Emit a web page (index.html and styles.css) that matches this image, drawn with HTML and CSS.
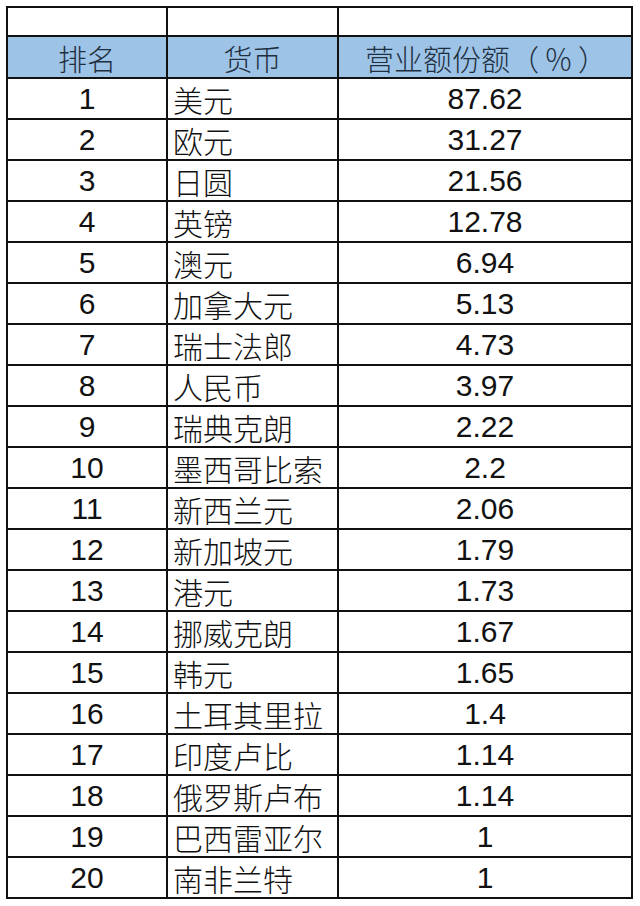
FILE: index.html
```html
<!DOCTYPE html>
<html lang="zh-CN">
<head>
<meta charset="utf-8">
<title>货币营业额份额排名</title>
<link rel="stylesheet" href="styles.css">
</head>
<body>
<table class="sheet">
  <colgroup>
    <col class="c-rank">
    <col class="c-cur">
    <col class="c-val">
  </colgroup>
  <tbody>
    <tr class="blank"><td></td><td></td><td></td></tr>
    <tr class="head"><td>排名</td><td>货币</td><td class="hval">营业额份额（<span class="pct">％</span>）</td></tr>
    <tr><td class="num">1</td><td class="name">美元</td><td class="num">87.62</td></tr>
    <tr><td class="num">2</td><td class="name">欧元</td><td class="num">31.27</td></tr>
    <tr><td class="num">3</td><td class="name">日圆</td><td class="num">21.56</td></tr>
    <tr><td class="num">4</td><td class="name">英镑</td><td class="num">12.78</td></tr>
    <tr><td class="num">5</td><td class="name">澳元</td><td class="num">6.94</td></tr>
    <tr><td class="num">6</td><td class="name">加拿大元</td><td class="num">5.13</td></tr>
    <tr><td class="num">7</td><td class="name">瑞士法郎</td><td class="num">4.73</td></tr>
    <tr><td class="num">8</td><td class="name">人民币</td><td class="num">3.97</td></tr>
    <tr><td class="num">9</td><td class="name">瑞典克朗</td><td class="num">2.22</td></tr>
    <tr><td class="num">10</td><td class="name">墨西哥比索</td><td class="num">2.2</td></tr>
    <tr><td class="num">11</td><td class="name">新西兰元</td><td class="num">2.06</td></tr>
    <tr><td class="num">12</td><td class="name">新加坡元</td><td class="num">1.79</td></tr>
    <tr><td class="num">13</td><td class="name">港元</td><td class="num">1.73</td></tr>
    <tr><td class="num">14</td><td class="name">挪威克朗</td><td class="num">1.67</td></tr>
    <tr><td class="num">15</td><td class="name">韩元</td><td class="num">1.65</td></tr>
    <tr><td class="num">16</td><td class="name">土耳其里拉</td><td class="num">1.4</td></tr>
    <tr><td class="num">17</td><td class="name">印度卢比</td><td class="num">1.14</td></tr>
    <tr><td class="num">18</td><td class="name">俄罗斯卢布</td><td class="num">1.14</td></tr>
    <tr><td class="num">19</td><td class="name">巴西雷亚尔</td><td class="num">1</td></tr>
    <tr><td class="num">20</td><td class="name">南非兰特</td><td class="num">1</td></tr>
  </tbody>
</table>
</body>
</html>
```
FILE: styles.css
```css
html, body {
  margin: 0;
  padding: 0;
  background: #ffffff;
}

body {
  padding: 6px 0 0 6px;
}

.sheet {
  border-collapse: separate;
  border-spacing: 0;
  table-layout: fixed;
  width: 627px;
  border-top: 2px solid #111;
  border-left: 2px solid #111;
  color: #111;
}

.c-rank { width: 160px; }
.c-cur { width: 171px; }
.c-val { width: 294px; }

.sheet td {
  border-right: 2px solid #111;
  border-bottom: 2px solid #111;
  height: 41px;
  padding: 0 0 3px 0;
  box-sizing: border-box;
  vertical-align: bottom;
  white-space: nowrap;
}

.sheet tr.blank td {
  height: 29px;
}

.sheet tr.head td {
  height: 42px;
  background: #9dc3e6;
  color: #1f2f40;
  text-align: center;
  font-family: "Noto Sans CJK SC", sans-serif;
  font-weight: 300;
  font-size: 29px;
  line-height: 29px;
  padding-bottom: 4px;
}

.sheet tr.head td.hval {
  padding-left: 2px;
}

.pct {
  display: inline-block;
  margin: 0 5px;
}

.num {
  text-align: center;
  font-family: "Liberation Sans", Arial, sans-serif;
  font-size: 30px;
  line-height: 30px;
  padding-bottom: 4px !important;
}

.name {
  text-align: left;
  font-family: "Noto Sans CJK SC", sans-serif;
  font-weight: 300;
  font-size: 30px;
  line-height: 30px;
  padding-left: 5px !important;
  padding-bottom: 4px !important;
}
```
